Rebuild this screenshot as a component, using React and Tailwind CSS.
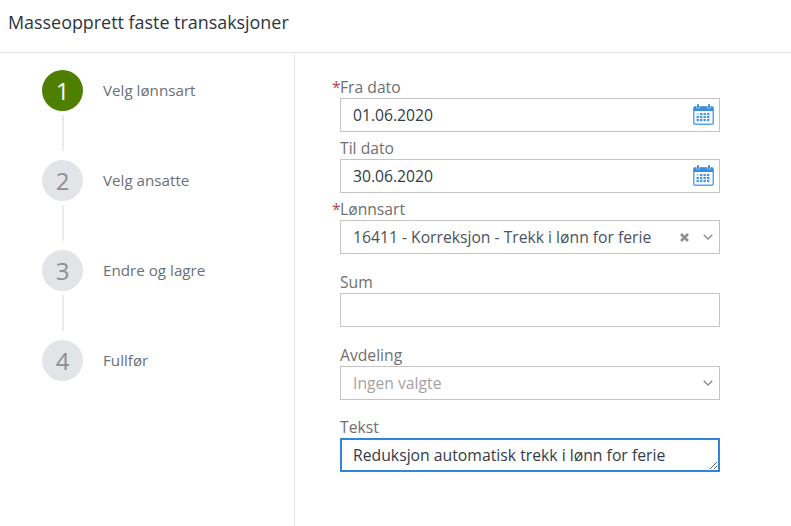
import React from 'react';

const steps = [
  { n: 1, label: 'Velg lønnsart', active: true },
  { n: 2, label: 'Velg ansatte' },
  { n: 3, label: 'Endre og lagre' },
  { n: 4, label: 'Fullfør' },
];

function CalendarIcon() {
  return (
    <svg width="21" height="22" viewBox="0 0 21 22" className="shrink-0 -mt-[2px]">
      <rect x="0.75" y="3.75" width="19.5" height="17.5" rx="1.5" fill="#fff" stroke="#5ba4e6" strokeWidth="1.5" />
      <rect x="1" y="4" width="19" height="4" fill="#3b8ede" />
      <rect x="3.5" y="0.5" width="3" height="5" rx="1" fill="#fff" />
      <rect x="14.5" y="0.5" width="3" height="5" rx="1" fill="#fff" />
      <rect x="4" y="1" width="2" height="4.5" rx="1" fill="#3b8ede" />
      <rect x="15" y="1" width="2" height="4.5" rx="1" fill="#3b8ede" />
      {[10, 13, 16].map((y) =>
        [3.5, 7, 10.5, 14].map((x) => (
          <rect key={`${x}-${y}`} x={x} y={y} width="2.4" height="2.2" fill={x === 3.5 && y === 10 ? '#bcd9f3' : '#4a97e0'} />
        ))
      )}
    </svg>
  );
}

function Chevron() {
  return (
    <svg width="10" height="6" viewBox="0 0 10 6" fill="none" stroke="#8c8c8c" strokeWidth="1.4">
      <path d="M0.7 0.8 L5 5 L9.3 0.8" />
    </svg>
  );
}

function FieldLabel({ children, required, className = '' }) {
  return (
    <div className={`h-5 pb-[2px] flex items-center text-[15.7px] leading-5 text-[#6f6f6f] ${className}`}>
      {required && <span className="-ml-2 w-2 text-[#b5405f]">*</span>}
      {children}
    </div>
  );
}

function Box({ children, className = '' }) {
  return (
    <div className={`h-[34px] w-[380px] border border-[#c4c4c4] bg-white pl-3 pr-[5px] flex items-center text-[15.7px] text-[#333b47] ${className}`}>
      {children}
    </div>
  );
}

export default function App() {
  return (
    <div className="w-[791px] h-[526px] bg-white overflow-hidden font-['Open_Sans',sans-serif] flex flex-col">
      <div className="h-[53px] shrink-0 border-b border-[#e3e5e8] pl-2 pt-[10px] text-[17.9px] leading-6 text-[#2c3442]">
        Masseopprett faste transaksjoner
      </div>
      <div className="flex flex-1 min-h-0">
        <div className="w-[295px] shrink-0 border-r border-[#e3e5e8] pl-[42px] pt-[17px]">
          {steps.map((s, i) => (
            <div key={s.n}>
              <div className="flex items-center gap-5 h-[41px]">
                <div className={`w-[41px] h-[41px] rounded-full flex items-center justify-center text-[24px] ${s.active ? 'bg-[#4f7f00] text-white' : 'bg-[#e2e4e7] text-[#8f8f8f]'}`}>
                  {s.n}
                </div>
                <span className="text-[15.2px] text-[#6b7079]">{s.label}</span>
              </div>
              {i < steps.length - 1 && (
                <div className="ml-5 w-[2px] h-[36px] mt-1 mb-[9px] bg-[#e9eaec]" />
              )}
            </div>
          ))}
        </div>
        <div className="pl-[45px] pt-[25px]">
          <FieldLabel required>Fra dato</FieldLabel>
          <Box className="justify-between">
            <span className="mt-[2px]">01.06.2020</span>
            <CalendarIcon />
          </Box>
          <FieldLabel className="mt-[7px]">Til dato</FieldLabel>
          <Box className="justify-between">
            <span className="mt-[2px]">30.06.2020</span>
            <CalendarIcon />
          </Box>
          <FieldLabel required className="mt-[7px]">Lønnsart</FieldLabel>
          <Box className="justify-between">
            <span className="mt-[2px] text-[#4b5360]">16411 - Korreksjon - Trekk i lønn for ferie</span>
            <span className="flex items-center gap-[14px] pr-[1px]">
              <svg width="9" height="9" viewBox="0 0 9 9" stroke="#8f8f8f" strokeWidth="2.6">
                <path d="M1 1 L8 8 M8 1 L1 8" />
              </svg>
              <Chevron />
            </span>
          </Box>
          <FieldLabel className="mt-[19px]">Sum</FieldLabel>
          <Box />
          <FieldLabel className="mt-[19px]">Avdeling</FieldLabel>
          <Box className="justify-between">
            <span className="mt-[2px] text-[#a3a3a3]">Ingen valgte</span>
            <span className="pr-[1px]"><Chevron /></span>
          </Box>
          <FieldLabel className="mt-[18px]">Tekst</FieldLabel>
          <textarea
            readOnly
            value="Reduksjon automatisk trekk i lønn for ferie"
            className="block h-[34px] w-[380px] border-2 border-[#2f86d6] pl-[11px] pt-[3px] text-[15.75px] leading-6 text-[#333b47] outline-none resize overflow-hidden"
          />
        </div>
      </div>
    </div>
  );
}
